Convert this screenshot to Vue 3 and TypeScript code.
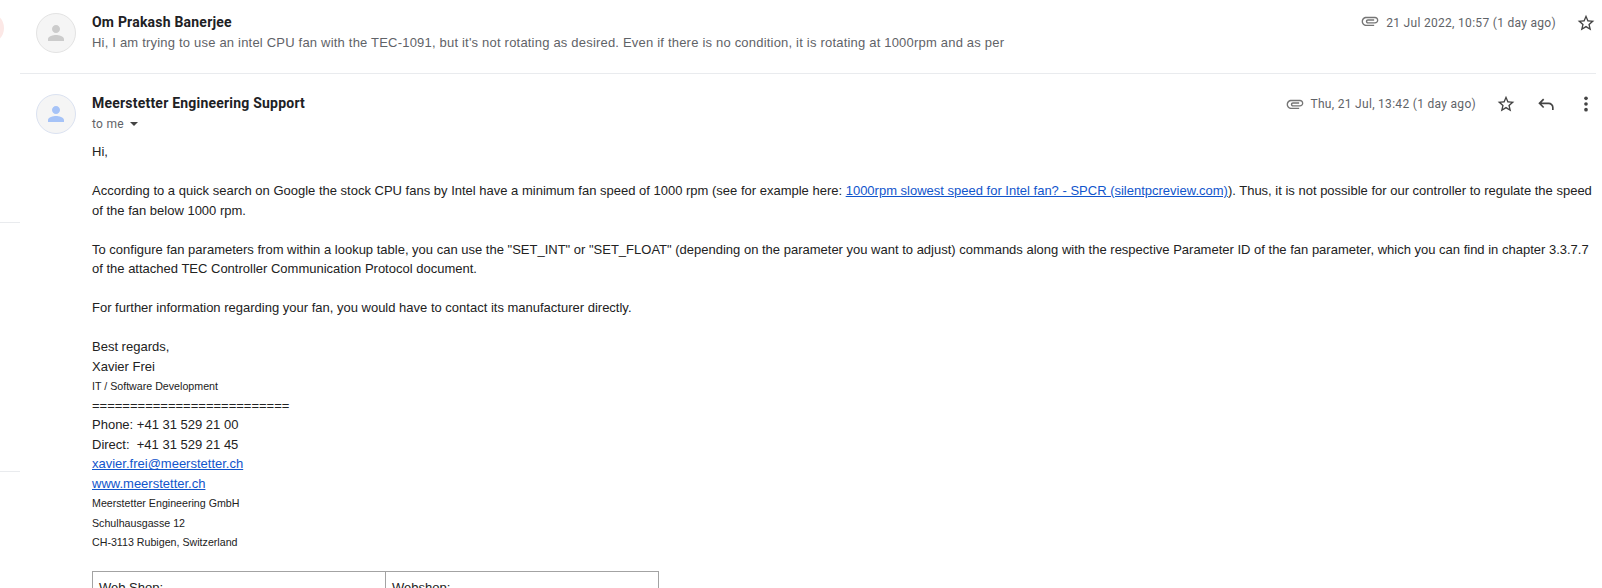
<script setup lang="ts">
const starPath =
  'M22 9.24l-7.19-.62L12 2 9.19 8.63 2 9.24l5.46 4.73L5.82 21 12 17.27 18.18 21l-1.63-7.03L22 9.24zM12 15.4l-3.76 2.27 1-4.28-3.32-2.88 4.38-.38L12 6.1l1.71 4.04 4.38.38-3.32 2.88 1 4.28L12 15.4z'
const clipPath =
  'M2 12.5C2 9.46 4.46 7 7.5 7H18c2.21 0 4 1.79 4 4s-1.79 4-4 4H9.5C8.12 15 7 13.88 7 12.5S8.12 10 9.5 10H17v1.6H9.41c-.9 0-.9 1.8 0 1.8H18c1.3 0 2.4-1.1 2.4-2.4S19.3 8.6 18 8.6H7.5C5.35 8.6 3.6 10.35 3.6 12.5S5.35 16.4 7.5 16.4H17V18H7.5C4.46 18 2 15.54 2 12.5z'
const personPath =
  'M12 12c2.21 0 4-1.79 4-4s-1.79-4-4-4-4 1.79-4 4 1.79 4 4 4zm0 2c-2.67 0-8 1.34-8 4v2h16v-2c0-2.66-5.33-4-8-4z'
</script>

<template>
  <main class="page">
    <aside class="rail">
      <span class="bubble"></span>
    </aside>
    <section class="thread">
      <article class="message first">
        <div class="avatar"><svg viewBox="0 0 24 24"><path :d="personPath" /></svg></div>
        <div class="content">
          <header class="head">
            <h3 class="name">Om Prakash Banerjee</h3>
            <div class="meta">
              <svg class="clip raised" viewBox="0 0 24 24"><path :d="clipPath" /></svg>
              <span class="date">21 Jul 2022, 10:57 (1 day ago)</span>
              <svg class="icon" viewBox="0 0 24 24"><path :d="starPath" /></svg>
            </div>
          </header>
          <p class="preview">Hi, I am trying to use an intel CPU fan with the TEC-1091, but it's not rotating as desired. Even if there is no condition, it is rotating at 1000rpm and as per</p>
        </div>
      </article>

      <article class="message second">
        <div class="avatar blue"><svg viewBox="0 0 24 24"><path :d="personPath" /></svg></div>
        <div class="content">
          <header class="head">
            <h3 class="name">Meerstetter Engineering Support</h3>
            <div class="meta">
              <svg class="clip near" viewBox="0 0 24 24"><path :d="clipPath" /></svg>
              <span class="date">Thu, 21 Jul, 13:42 (1 day ago)</span>
              <svg class="icon" viewBox="0 0 24 24"><path :d="starPath" /></svg>
              <svg class="icon" viewBox="0 0 24 24"><path d="M9.2 6.2 4.2 11.2l5 5M4.6 11.2h10.6a5 5 0 0 1 5 5V19.2" class="stroke" /></svg>
              <svg class="icon" viewBox="0 0 24 24"><circle cx="12" cy="5.2" r="2.2" /><circle cx="12" cy="12" r="2.2" /><circle cx="12" cy="18.8" r="2.2" /></svg>
            </div>
          </header>
          <div class="to"><span>to me</span><i class="caret"></i></div>
          <div class="body">
            <p>Hi,</p>
            <p>According to a quick search on Google the stock CPU fans by Intel have a minimum fan speed of 1000 rpm (see for example here: <a>1000rpm slowest speed for Intel fan? - SPCR (silentpcreview.com)</a>). Thus, it is not possible for our controller to regulate the speed<br />of the fan below 1000 rpm.</p>
            <p>To configure fan parameters from within a lookup table, you can use the "SET_INT" or "SET_FLOAT" (depending on the parameter you want to adjust) commands along with the respective Parameter ID of the fan parameter, which you can find in chapter 3.3.7.7<br />of the attached TEC Controller Communication Protocol document.</p>
            <p>For further information regarding your fan, you would have to contact its manufacturer directly.</p>
            <div class="signature">
              <div>Best regards,</div>
              <div>Xavier Frei</div>
              <div><span class="small">IT / Software Development</span></div>
              <div>==========================</div>
              <div>Phone: +41 31 529 21 00</div>
              <div>Direct:&nbsp; +41 31 529 21 45</div>
              <div><a>xavier.frei@meerstetter.ch</a></div>
              <div><a>www.meerstetter.ch</a></div>
              <div><span class="small">Meerstetter Engineering GmbH</span></div>
              <div><span class="small">Schulhausgasse 12</span></div>
              <div><span class="small">CH-3113 Rubigen, Switzerland</span></div>
            </div>
            <div class="shops">
              <div class="cell">Web Shop:</div>
              <div class="cell">Webshop:</div>
            </div>
          </div>
        </div>
      </article>
    </section>
  </main>
</template>

<style>
body {
  margin: 0;
  overflow: hidden;
}
</style>

<style scoped>
.page {
  display: flex;
  width: 1602px;
  height: 588px;
  overflow: hidden;
  background: #fff;
  font-family: Roboto, Arial, sans-serif;
}
.rail {
  flex: none;
  box-sizing: border-box;
  width: 20px;
  height: 472px;
  border-bottom: 1px solid #e9ebee;
  overflow: hidden;
  background: linear-gradient(#e9ebee, #e9ebee) 0 222px / 20px 1px no-repeat;
}
.bubble {
  display: block;
  width: 32px;
  height: 32px;
  margin: 12px 0 0 -28px;
  border-radius: 50%;
  background: #fce8e6;
}
.thread {
  width: 1576px;
  flex: none;
}
.message {
  display: flex;
  box-sizing: border-box;
  padding-left: 16px;
}
.first {
  height: 74px;
  padding-top: 13px;
  border-bottom: 1px solid #e9ebee;
}
.second {
  padding-top: 20px;
}
.avatar {
  flex: none;
  display: flex;
  align-items: center;
  justify-content: center;
  box-sizing: border-box;
  width: 40px;
  height: 40px;
  border: 1px solid #e3e3e3;
  border-radius: 50%;
  background: #f5f5f5;
}
.avatar svg {
  width: 24px;
  height: 24px;
  fill: #ccc;
}
.avatar.blue {
  border-color: #dbe2f1;
}
.avatar.blue svg {
  fill: #a6c3f7;
}
.content {
  flex: none;
  width: 1504px;
  margin-left: 16px;
}
.head {
  display: flex;
  justify-content: space-between;
  height: 20px;
}
.name {
  margin: 0;
  font-size: 14px;
  font-weight: 700;
  line-height: 19px;
  letter-spacing: 0.21px;
  color: #202124;
  white-space: nowrap;
}
.meta {
  display: flex;
  align-items: center;
  height: 20px;
}
.clip {
  width: 20px;
  height: 20px;
  margin-right: 6px;
  fill: #757575;
}
.near {
  margin-right: 5px;
}
.raised {
  margin-bottom: 5px;
}
.date {
  font-size: 12px;
  line-height: 20px;
  letter-spacing: 0.3px;
  color: #5f6368;
  white-space: nowrap;
}
.icon {
  width: 20px;
  height: 20px;
  margin-left: 20px;
  fill: #444;
}
.stroke {
  fill: none;
  stroke: #444;
  stroke-width: 2;
}
.preview {
  margin: 0;
  font-family: "Liberation Sans", Arial, sans-serif;
  font-size: 13px;
  line-height: 20px;
  letter-spacing: 0.2px;
  color: #5f6368;
  white-space: nowrap;
}
.to {
  display: flex;
  align-items: center;
  height: 20px;
  font-size: 12px;
  letter-spacing: 0.3px;
  color: #5f6368;
}
.caret {
  margin-left: 6px;
  border: 4px solid transparent;
  border-top-color: #444;
  border-bottom: 0;
}
.body {
  margin-top: 8.4px;
  font: 13px/19.5px "Liberation Sans", Arial, sans-serif;
  color: #222;
  white-space: nowrap;
}
.body p {
  margin: 0 0 19.5px;
}
a {
  color: #15c;
  text-decoration: underline;
}
.signature > div {
  height: 19.5px;
}
.small {
  font-size: 10.667px;
}
.shops {
  display: grid;
  grid-template-columns: 292px 272px;
  gap: 1px;
  width: 565px;
  height: 60px;
  margin-top: 19.1px;
  padding: 1px;
  background: #a3a3a3;
}
.cell {
  padding: 6px;
  background: #fff;
}
</style>
